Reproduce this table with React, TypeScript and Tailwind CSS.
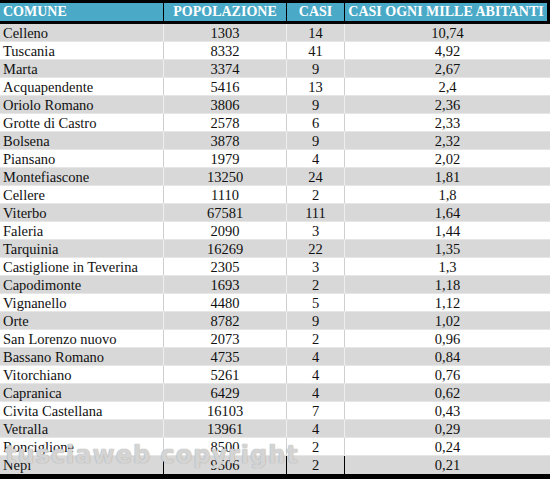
const rows: [string, string, string, string][] = [
  ["Celleno", "1303", "14", "10,74"],
  ["Tuscania", "8332", "41", "4,92"],
  ["Marta", "3374", "9", "2,67"],
  ["Acquapendente", "5416", "13", "2,4"],
  ["Oriolo Romano", "3806", "9", "2,36"],
  ["Grotte di Castro", "2578", "6", "2,33"],
  ["Bolsena", "3878", "9", "2,32"],
  ["Piansano", "1979", "4", "2,02"],
  ["Montefiascone", "13250", "24", "1,81"],
  ["Cellere", "1110", "2", "1,8"],
  ["Viterbo", "67581", "111", "1,64"],
  ["Faleria", "2090", "3", "1,44"],
  ["Tarquinia", "16269", "22", "1,35"],
  ["Castiglione in Teverina", "2305", "3", "1,3"],
  ["Capodimonte", "1693", "2", "1,18"],
  ["Vignanello", "4480", "5", "1,12"],
  ["Orte", "8782", "9", "1,02"],
  ["San Lorenzo nuovo", "2073", "2", "0,96"],
  ["Bassano Romano", "4735", "4", "0,84"],
  ["Vitorchiano", "5261", "4", "0,76"],
  ["Capranica", "6429", "4", "0,62"],
  ["Civita Castellana", "16103", "7", "0,43"],
  ["Vetralla", "13961", "4", "0,29"],
  ["Ronciglione", "8500", "2", "0,24"],
  ["Nepi", "9506", "2", "0,21"],
];

export default function App() {
  return (
    <div
      className="relative w-[550px] h-[479px] overflow-hidden bg-black text-[14.5px] text-[#111]"
      style={{ fontFamily: '"Liberation Serif", "Times New Roman", serif' }}
    >
      <div className="pt-[3px]">
        <div className="flex h-[18px] mr-[3px] bg-[#4aa9c7] text-white font-bold text-[14px] leading-[18px]">
          <div className="w-[164px] pl-[3px] border-r border-black">COMUNE</div>
          <div className="w-[123px] text-center border-r border-black">POPOLAZIONE</div>
          <div className="w-[58px] text-center border-r border-black">CASI</div>
          <div className="flex-1 text-center whitespace-nowrap">CASI OGNI MILLE ABITANTI</div>
        </div>
        <div className="h-[3px]" />
        <div className="flex flex-col">
          {rows.map((r, i) => {
            const last = i === rows.length - 1;
            const gray = i % 2 === 0;
            const line = last ? "border-black" : gray ? "border-[#eeeeee]" : "border-[#cfcfcf]";
            return (
              <div
                key={i}
                className={`flex h-[18px] leading-[18px] ${gray ? "bg-[#d8d8d8]" : "bg-white"} ${i < rows.length - 1 ? "border-b border-[#e6e6e6]" : ""}`}
              >
                <div className={`w-[164px] pl-[3px] whitespace-nowrap border-r ${line}`}>{r[0]}</div>
                <div className={`w-[123px] text-center border-r ${line}`}>{r[1]}</div>
                <div className={`w-[58px] text-center border-r ${line}`}>{r[2]}</div>
                <div className="flex-1 text-center">{r[3]}</div>
              </div>
            );
          })}
        </div>
      </div>
      <div
        className="absolute left-[5px] top-[437px] text-[24px] tracking-[1px] font-bold text-white/50 whitespace-nowrap"
        style={{
          fontFamily: '"DejaVu Sans", sans-serif',
          textShadow: "0 0 1px #aaa, 0 0 1px #aaa",
        }}
      >
        tusciaweb copyright
      </div>
    </div>
  );
}
